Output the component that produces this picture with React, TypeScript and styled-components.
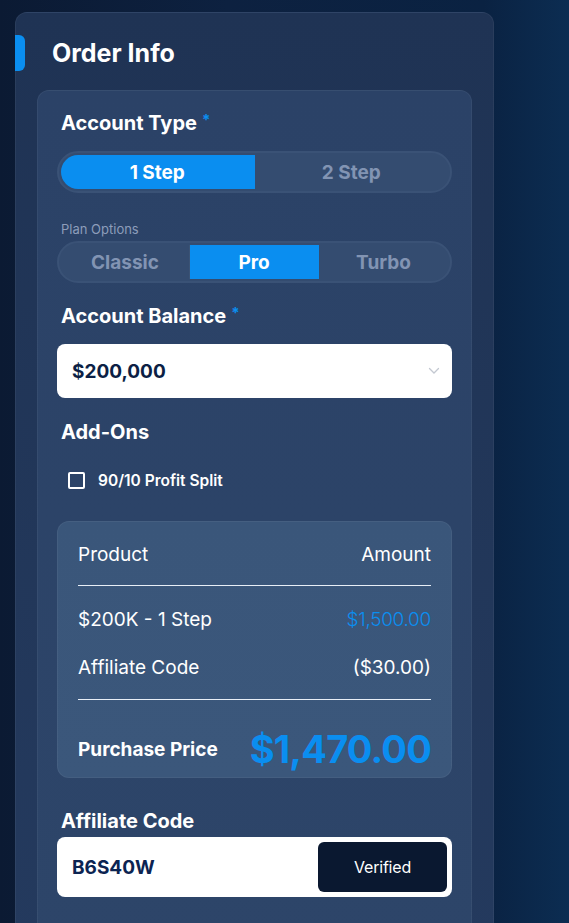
import React, { useState } from 'react';
import styled, { createGlobalStyle } from 'styled-components';

const GlobalStyle = createGlobalStyle`
  html, body {
    margin: 0;
    padding: 0;
    height: 100%;
  }
  body {
    font-family: Inter, 'Noto Sans', 'Liberation Sans', sans-serif;
    background: linear-gradient(90deg, #0b1a33 0%, #0d2140 40%, #0a2242 85%, #0c2d52 100%);
    color: #ffffff;
    overflow: hidden;
  }
  * {
    box-sizing: border-box;
  }
`;

const Page = styled.div`
  min-height: 923px;
  padding: 12px 0 0 15px;
`;

const OuterCard = styled.section`
  width: 479px;
  min-height: 960px;
  background: linear-gradient(180deg, #1f3354 0%, #243a5e 100%);
  border: 1px solid rgba(255, 255, 255, 0.05);
  border-radius: 12px;
  padding-top: 22px;
`;

const Header = styled.div`
  display: flex;
  align-items: center;
  gap: 27px;
  height: 36px;
  margin-left: -1px;
`;

const Marker = styled.span`
  width: 10px;
  height: 36px;
  background: #0a8ef0;
  border-radius: 0 6px 6px 0;
`;

const Title = styled.h1`
  margin: 0;
  font-size: 25px;
  font-weight: 700;
  letter-spacing: 0;
`;

const InnerCard = styled.div`
  margin: 19px 0 0 21px;
  width: 435px;
  min-height: 860px;
  background: linear-gradient(180deg, #2b4267 0%, #2d4569 100%);
  border: 1px solid rgba(255, 255, 255, 0.05);
  border-radius: 12px;
  padding: 20px 19px 0 19px;
`;

const Label = styled.div<{ $mt?: number; $mb?: number }>`
  padding-left: 4px;
  margin-top: ${(p) => p.$mt ?? 0}px;
  margin-bottom: ${(p) => p.$mb ?? 0}px;
  font-size: 20px;
  font-weight: 700;
  line-height: 24px;
  height: 24px;
  letter-spacing: 0;
`;

const Star = styled.span`
  position: relative;
  top: -5px;
  color: #0a8ef0;
  font-size: 15px;
  margin-left: 5px;
`;

const SmallLabel = styled.div`
  padding-left: 4px;
  margin-top: 28px;
  font-size: 13px;
  line-height: 16px;
  color: #8d9dba;
`;

const Toggle = styled.div<{ $cols: number; $mt?: number }>`
  display: grid;
  grid-template-columns: repeat(${(p) => p.$cols}, 1fr);
  height: 42px;
  margin-top: ${(p) => p.$mt ?? 0}px;
  padding: 2px;
  border: 2px solid #3a5276;
  border-radius: 21px;
  background: #344c70;
  overflow: hidden;
`;

const Segment = styled.button<{ $active: boolean }>`
  border: none;
  margin: 0;
  padding: 0;
  font-family: inherit;
  font-size: 19px;
  font-weight: 700;
  letter-spacing: 0;
  cursor: pointer;
  color: ${(p) => (p.$active ? '#ffffff' : '#8294b3')};
  background: ${(p) => (p.$active ? '#0a8ef0' : 'transparent')};
  border-right: 1px solid ${(p) => (p.$active ? '#0a8ef0' : 'rgba(255,255,255,0.04)')};
  &:first-child {
    border-radius: 17px 0 0 17px;
  }
  &:last-child {
    border-radius: 0 17px 17px 0;
    border-right: none;
  }
`;

const SelectBox = styled.div`
  display: flex;
  align-items: center;
  justify-content: space-between;
  height: 54px;
  margin-top: 16px;
  padding: 0 12px 0 15px;
  background: #ffffff;
  border-radius: 8px;
  color: #0c1f45;
  font-size: 19px;
  font-weight: 700;
`;

const Chevron = () => (
  <svg width="12" height="8" viewBox="0 0 12 8" fill="none">
    <path d="M1.5 1.5L6 6L10.5 1.5" stroke="#c3c8d1" strokeWidth="1.3" strokeLinecap="round" />
  </svg>
);

const CheckRow = styled.label`
  display: flex;
  align-items: center;
  gap: 13px;
  height: 20px;
  margin-top: 26px;
  padding-left: 11px;
  font-size: 15.5px;
  font-weight: 600;
  cursor: pointer;
`;

const Box = styled.span<{ $checked: boolean }>`
  width: 17px;
  height: 17px;
  border: 2px solid #ffffff;
  border-radius: 2px;
  background: ${(p) => (p.$checked ? '#0a8ef0' : 'transparent')};
`;

const Summary = styled.div`
  margin-top: 31px;
  height: 257px;
  background: linear-gradient(180deg, #3a567a 0%, #3b577b 100%);
  border: 1px solid rgba(255, 255, 255, 0.05);
  border-radius: 12px;
  padding: 20px 20px 0 20px;
`;

const Row = styled.div<{ $h: number; $pt?: number }>`
  display: flex;
  align-items: center;
  justify-content: space-between;
  height: ${(p) => p.$h}px;
  padding-top: ${(p) => p.$pt ?? 0}px;
  font-size: 19px;
  letter-spacing: 0;
`;

const Spacer = styled.div<{ $h: number }>`
  height: ${(p) => p.$h}px;
`;

const Divider = styled.hr`
  margin: 0;
  border: none;
  border-top: 1px solid #e8eef6;
`;

const Price = styled.span<{ $big?: boolean }>`
  color: #0a8ef0;
  font-size: ${(p) => (p.$big ? '38px' : '19px')};
  font-weight: ${(p) => (p.$big ? 700 : 300)};
  letter-spacing: ${(p) => (p.$big ? '-0.8px' : '-0.3px')};
`;

const Strong = styled.span`
  font-weight: 700;
`;

const CodeBox = styled.div`
  display: flex;
  align-items: center;
  justify-content: space-between;
  height: 60px;
  margin-top: 4px;
  padding: 5px 5px 5px 15px;
  background: #ffffff;
  border-radius: 8px;
  color: #0c2452;
  font-size: 19px;
  font-weight: 700;
`;

const VerifyButton = styled.button`
  width: 129px;
  height: 50px;
  border: none;
  border-radius: 6px;
  background: #0a1830;
  color: #ffffff;
  font-family: inherit;
  font-size: 16px;
  font-weight: 400;
  letter-spacing: -0.2px;
`;

export default function App() {
  const [step, setStep] = useState('1 Step');
  const [plan, setPlan] = useState('Pro');
  const [split, setSplit] = useState(false);

  return (
    <>
      <GlobalStyle />
      <Page>
        <OuterCard>
          <Header>
            <Marker />
            <Title>Order Info</Title>
          </Header>
          <InnerCard>
            <Label $mb={16}>
              Account Type<Star>*</Star>
            </Label>
            <Toggle $cols={2}>
              {['1 Step', '2 Step'].map((s) => (
                <Segment key={s} $active={step === s} onClick={() => setStep(s)}>
                  {s}
                </Segment>
              ))}
            </Toggle>

            <SmallLabel>Plan Options</SmallLabel>
            <Toggle $cols={3} $mt={4}>
              {['Classic', 'Pro', 'Turbo'].map((s) => (
                <Segment key={s} $active={plan === s} onClick={() => setPlan(s)}>
                  {s}
                </Segment>
              ))}
            </Toggle>

            <Label $mt={21}>
              Account Balance<Star>*</Star>
            </Label>
            <SelectBox>
              <span>$200,000</span>
              <Chevron />
            </SelectBox>

            <Label $mt={22}>Add-Ons</Label>
            <CheckRow onClick={() => setSplit(!split)}>
              <Box $checked={split} />
              90/10 Profit Split
            </CheckRow>

            <Summary>
              <Row $h={24}>
                <span>Product</span>
                <span>Amount</span>
              </Row>
              <Spacer $h={19} />
              <Divider />
              <Row $h={66}>
                <span>$200K - 1 Step</span>
                <Price>$1,500.00</Price>
              </Row>
              <Row $h={30}>
                <span>Affiliate Code</span>
                <span>($30.00)</span>
              </Row>
              <Spacer $h={17} />
              <Divider />
              <Row $h={80} $pt={18}>
                <Strong>Purchase Price</Strong>
                <Price $big>$1,470.00</Price>
              </Row>
            </Summary>

            <Label $mt={31}>Affiliate Code</Label>
            <CodeBox>
              <span>B6S40W</span>
              <VerifyButton>Verified</VerifyButton>
            </CodeBox>
          </InnerCard>
        </OuterCard>
      </Page>
    </>
  );
}
